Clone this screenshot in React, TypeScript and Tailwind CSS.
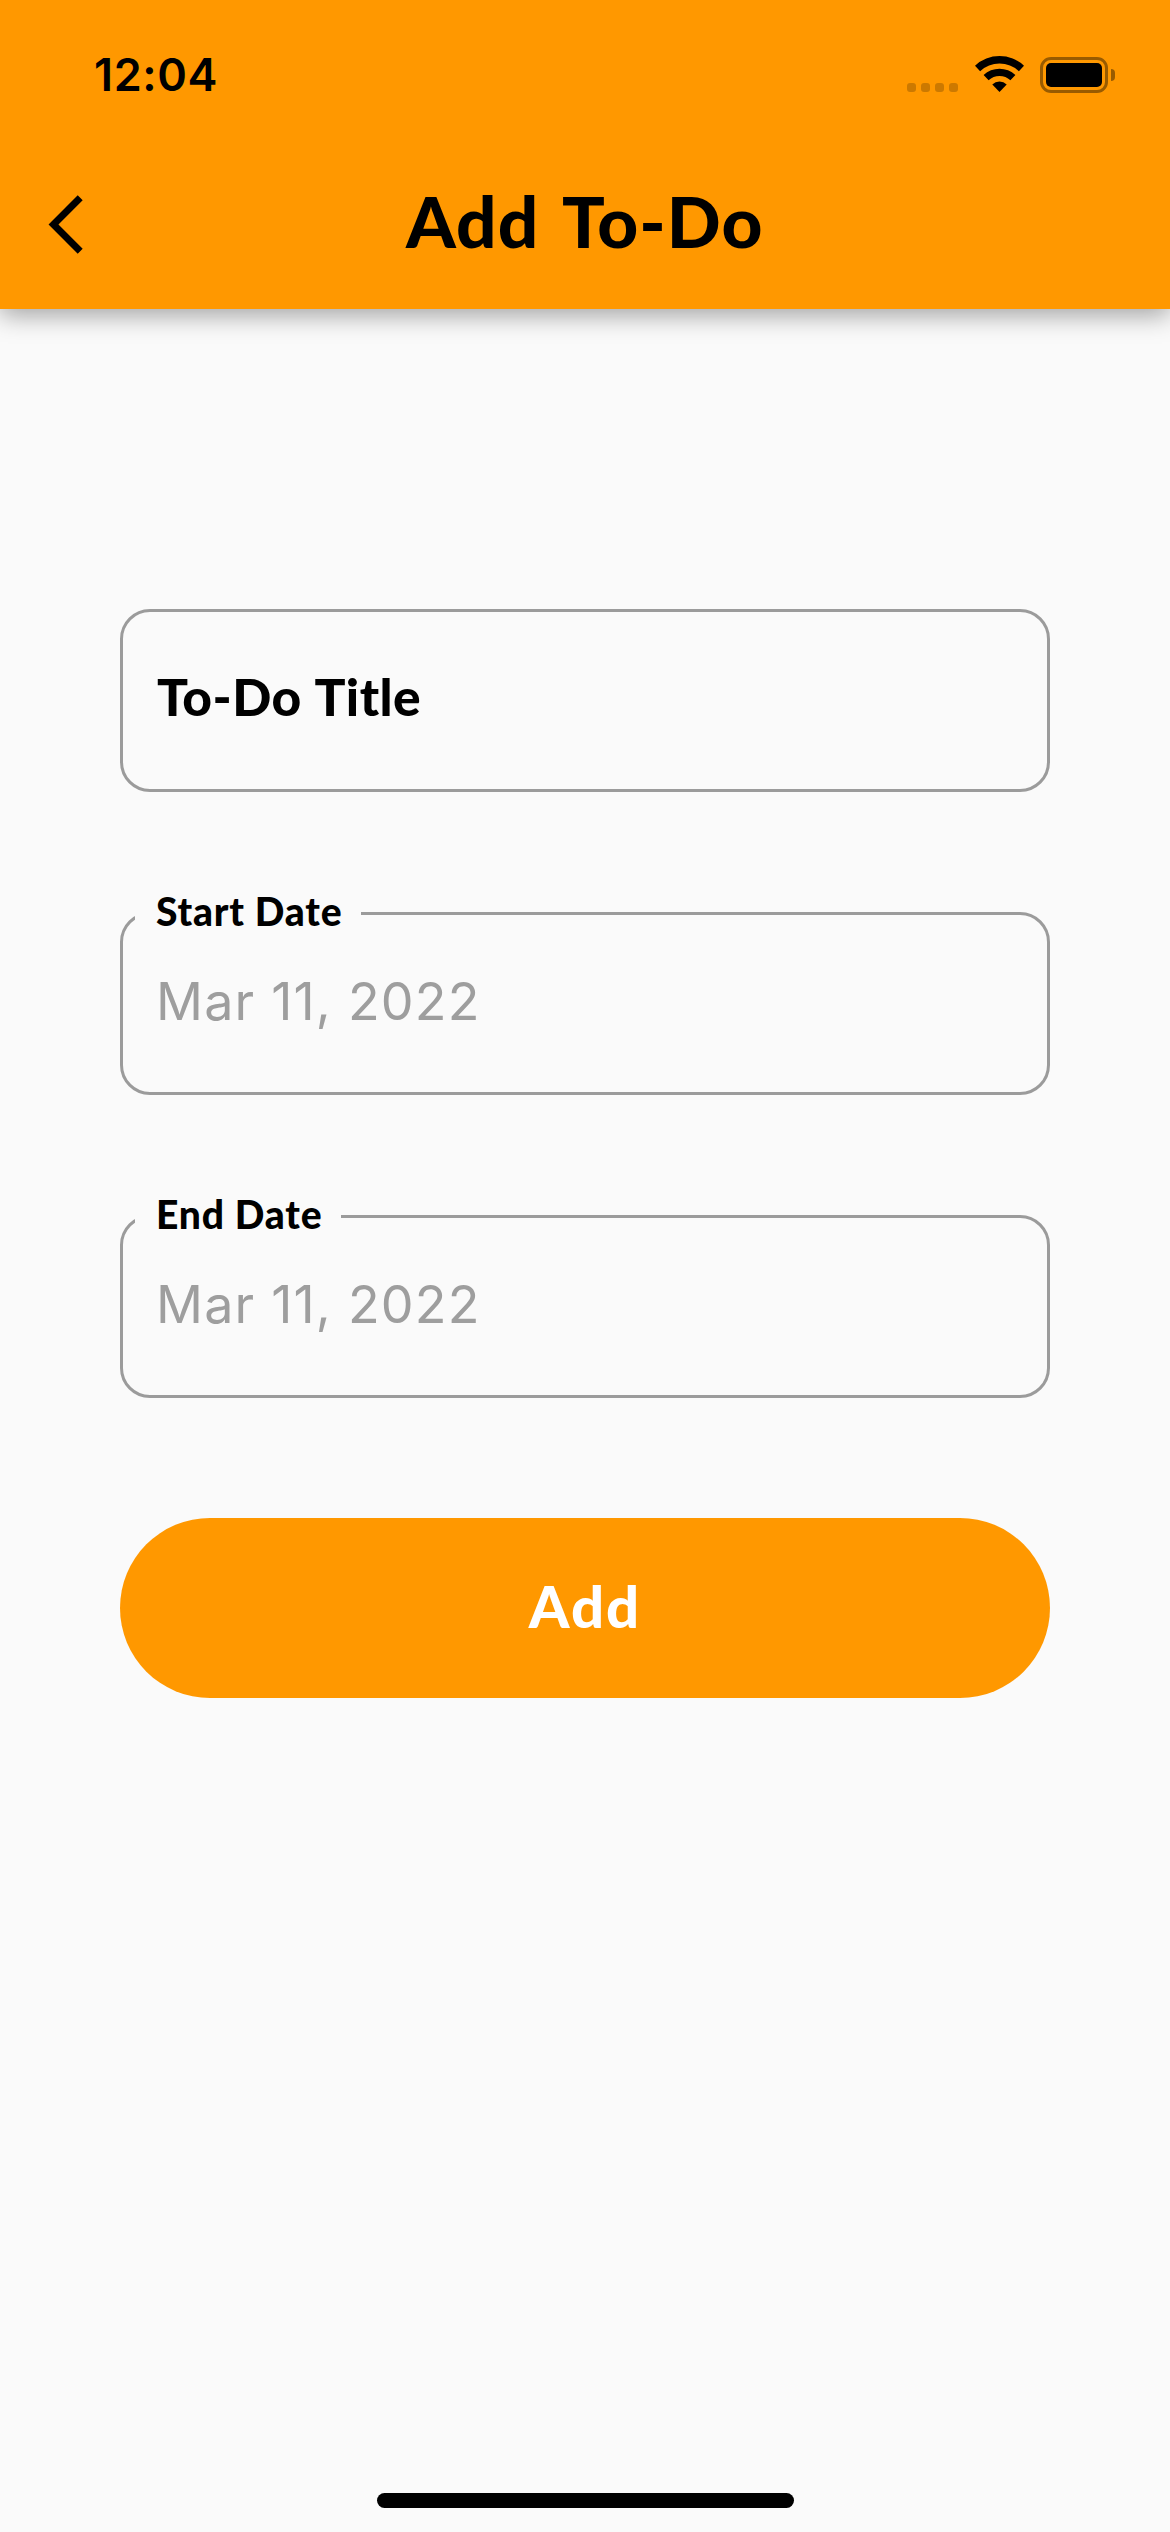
import React from "react";

function StatusIcons() {
  return (
    <div className="flex items-end">
      <div className="mr-[17px] mb-px flex gap-[5px]">
        {[0, 1, 2, 3].map((i) => (
          <span key={i} className="size-[9px] rounded-[3px] bg-black/20" />
        ))}
      </div>
      <svg className="mr-4 mb-px h-9 w-[49px]" viewBox="-24.5 -36 49 36" fill="black">
        <path d="M-24.5 -26.3A36 36 0 0 1 24.5 -26.3L19.4 -20.8A28.5 28.5 0 0 0 -19.4 -20.8Z" />
        <path d="M-15.9 -17A23.3 23.3 0 0 1 15.9 -17L10.9 -11.7A16 16 0 0 0 -10.9 -11.7Z" />
        <path d="M-7.2 -7.5A10.4 10.4 0 0 1 7.2 -7.5L0 0Z" />
      </svg>
      <div className="flex items-center">
        <div className="h-9 w-[68px] rounded-[11px] border-3 border-black/40 p-[3px]">
          <div className="h-full rounded-[5px] bg-black" />
        </div>
        <span className="ml-[3px] h-3 w-1 rounded-r-full bg-black/40" />
      </div>
    </div>
  );
}

function DateField({ label, value }: { label: string; value: string }) {
  return (
    <div className="relative flex h-[183px] items-center rounded-[30px] border-3 border-[#9b9b9b] pb-[4px] pl-[33px]">
      <label className="absolute -top-[15px] left-3 flex h-6 items-center bg-[#fafafa] pr-[19px] pb-px pl-[21px] font-['Lato',sans-serif] text-[39px] font-black tracking-[0.8px] whitespace-nowrap">
        {label}
      </label>
      <span className="text-[52px] tracking-[1.2px] whitespace-nowrap text-[#9e9e9e]">{value}</span>
    </div>
  );
}

export default function App() {
  return (
    <div className="flex h-[2532px] w-[1170px] flex-col bg-[#fafafa] font-['Inter',sans-serif] text-black">
      <header className="h-[309px] bg-[#ff9800] shadow-[0_6px_24px_rgba(0,0,0,0.36)]">
        <div className="flex h-[149px] items-center justify-between pr-[55px] pl-[94px]">
          <span className="text-[45px] font-semibold tracking-[0.6px]">12:04</span>
          <StatusIcons />
        </div>
        <div className="flex h-[149px] items-center pl-12">
          <svg className="h-[60px] w-[36px]" viewBox="48 194.5 36 60" fill="none" stroke="black" strokeWidth="7">
            <path d="M80.2 198.3L53.5 225L80.2 251.7" />
          </svg>
          <h1 className="ml-[322px] pb-1 font-['Lato',sans-serif] text-[71px] font-black tracking-[1px] whitespace-nowrap [word-spacing:7px]">
            Add To-Do
          </h1>
        </div>
      </header>
      <main className="flex flex-col gap-[120px] px-[120px] pt-[300px]">
        <div className="flex h-[183px] items-center rounded-[30px] border-3 border-[#9b9b9b] pb-[7px] pl-[34px]">
          <span className="font-['Lato',sans-serif] text-[51.5px] font-black tracking-[0.4px] whitespace-nowrap [word-spacing:2px]">
            To-Do Title
          </span>
        </div>
        <DateField label="Start Date" value="Mar 11, 2022" />
        <DateField label="End Date" value="Mar 11, 2022" />
        <button className="flex h-[180px] items-center justify-center rounded-full bg-[#ff9800] pb-1.5 font-['Lato',sans-serif] text-[58px] font-black tracking-[2px] text-white">
          Add
        </button>
      </main>
      <div className="mx-auto mt-auto mb-6 h-[15px] w-[417px] rounded-full bg-black" />
    </div>
  );
}
